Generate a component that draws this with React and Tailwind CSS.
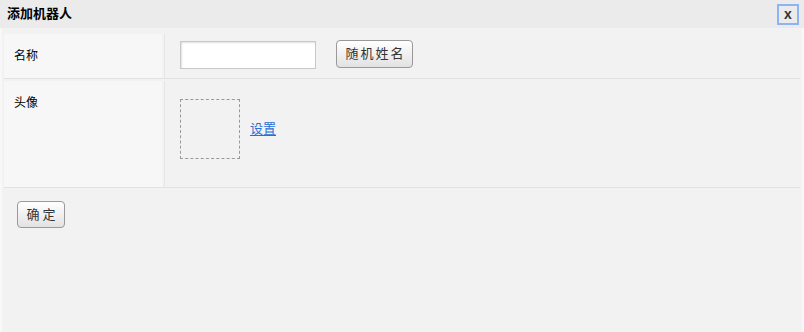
import React, { useState } from "react";

const font = { fontFamily: '"Liberation Sans", "Noto Sans CJK SC", sans-serif' };

const Row = ({ label, children, height, labelPad }) => (
  <div className="flex gap-[2px] border-b border-[#e2e2e2]" style={{ height }}>
    <div className={`w-[158px] shrink-0 bg-[#f7f7f7] pl-[10px] text-[12px] text-black ${labelPad}`}>
      {label}
    </div>
    <div className="flex-1 border-l border-[#e6e6e6] bg-[#f2f2f2]">{children}</div>
  </div>
);

const App = () => {
  const [name, setName] = useState("");

  return (
    <div className="flex h-[332px] w-[804px] flex-col bg-[#f2f2f2]" style={font}>
      <div className="flex h-[28px] shrink-0 items-center justify-between bg-[#ebebeb] pl-[7px] pr-[5px]">
        <span className="text-[13px] font-bold text-black">添加机器人</span>
        <button className="flex h-[21px] w-[22px] items-center justify-center border-2 border-[#8fb4f5] text-[14px] font-bold leading-none text-[#333]">
          x
        </button>
      </div>

      <div className="flex-1 border-x-2 border-[#f8f8f8] px-[2px] pt-[6px]">
        <Row label="名称" height={45} labelPad="pt-[13px]">
          <div className="flex items-center gap-[20px] pl-[15px] pt-[7px]">
            <input
              value={name}
              onChange={(e) => setName(e.target.value)}
              className="h-[28px] w-[136px] border border-[#c8c8c8] bg-white shadow-[inset_1px_1px_2px_#e0e0e0] outline-none"
            />
            <button className="mt-[-3px] h-[28px] w-[77px] rounded-[4px] border border-[#999] bg-gradient-to-b from-white to-[#e2e2e2] pl-[2px] text-[13px] tracking-[2px] text-[#333]">
              随机姓名
            </button>
          </div>
        </Row>
        <div className="h-[2px]" />
        <Row label="头像" height={107} labelPad="pt-[13px]">
          <div className="flex items-center gap-[10px] pl-[15px] pt-[18px]">
            <div className="h-[60px] w-[60px] border border-dashed border-[#999]" />
            <a href="#" className="text-[13px] text-[#2a6fd6] underline underline-offset-2">
              设置
            </a>
          </div>
        </Row>

        <div className="pl-[13px] pt-[13px]">
          <button className="h-[27px] w-[48px] rounded-[4px] border border-[#999] bg-gradient-to-b from-white to-[#e2e2e2] pl-[3px] text-[13px] tracking-[3px] text-[#333]">
            确定
          </button>
        </div>
      </div>
    </div>
  );
};

export default App;
